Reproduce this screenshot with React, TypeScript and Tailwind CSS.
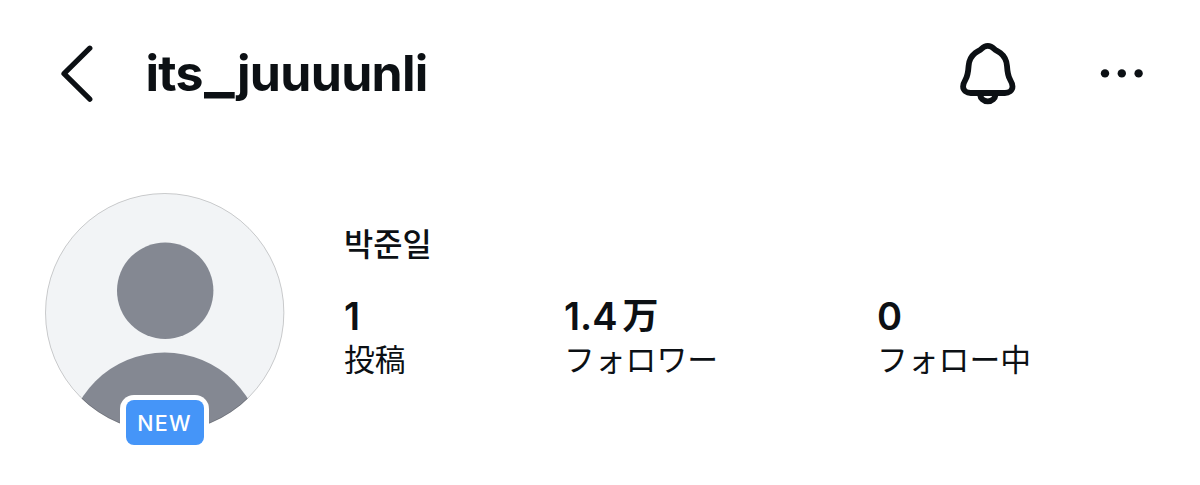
import React from "react";

interface StatProps {
  value: string;
  unit?: string;
  label: string;
  className?: string;
}

const Stat: React.FC<StatProps> = ({ value, unit, label, className }) => {
  return (
    <div className={`whitespace-nowrap ${className ?? ""}`}>
      <p className="flex h-[44px] items-center text-[38px] leading-[44px] font-semibold">
        {value}
        {unit && (
          <span className="ml-[5px] text-[36px] font-bold">{unit}</span>
        )}
      </p>
      <p className="h-[42px] text-[30.8px] leading-[44px]">{label}</p>
    </div>
  );
};

const BellIcon = () => (
  <svg
    className="ml-px"
    width="58"
    height="64"
    viewBox="0 0 58 64"
    fill="none"
    stroke="currentColor"
    strokeWidth="5.8"
    strokeLinejoin="round"
    strokeLinecap="round"
  >
    <path d="M28.8 4.8C25.8 4.8 24 6.3 22.3 8C20.8 9.5 18.5 10.2 16.2 12C12 15.3 9.9 19.5 9.6 25C9.2 31 8.9 34.4 6.6 38.4C5.2 40.8 4.1 43.2 4.1 45.6C4.1 49.5 7.7 52 11.7 52H45.9C49.9 52 53.5 49.5 53.5 45.6C53.5 43.2 52.4 40.8 51 38.4C48.7 34.4 48.4 31 48 25C47.7 19.5 45.6 15.3 41.4 12C39.1 10.2 36.8 9.5 35.3 8C33.6 6.3 31.8 4.8 28.8 4.8Z" />
    <path strokeLinecap="butt" d="M20.9 53C21.5 57.6 24.5 60.4 28.8 60.4C33.1 60.4 36.1 57.6 36.7 53" />
  </svg>
);

const Avatar = () => (
  <div className="relative h-[240px] w-[240px] shrink-0">
    <svg width="240" height="240" viewBox="0 0 240 240">
      <clipPath id="avatar">
        <circle cx="119.7" cy="119.7" r="119.5" />
      </clipPath>
      <circle cx="119.7" cy="119.7" r="119.5" fill="#f2f4f6" />
      <g clipPath="url(#avatar)" fill="#848892">
        <circle cx="120.2" cy="97.7" r="48.2" />
        <circle cx="119.7" cy="257.5" r="98" />
      </g>
      <circle cx="119.7" cy="119.7" r="119.2" fill="none" stroke="#000" strokeOpacity=".18" />
    </svg>
    <div className="absolute top-[201.5px] left-[75px] flex h-[56px] w-[89px] items-center justify-center rounded-[14px] bg-white">
      <span className="flex h-[45px] w-[78px] shrink-0 items-center justify-center rounded-[8px] bg-[#4595f8] pt-[2px] text-[21.5px] font-medium tracking-[1.2px] text-white">
        NEW
      </span>
    </div>
  </div>
);

const App = () => {
  return (
    <div className="h-[485px] w-full overflow-hidden bg-white font-['Inter','Noto_Sans_CJK_JP',sans-serif] text-[#0c1014]">
      <header className="flex h-[146px] items-center pr-[56px] pl-[60px]">
        <svg
          width="34"
          height="58"
          viewBox="0 0 34 58"
          fill="none"
          stroke="currentColor"
          strokeWidth="5.2"
          strokeLinecap="round"
          strokeLinejoin="round"
        >
          <path d="M29.8 4.2L4 29.7L29.8 55.2" />
        </svg>
        <h1 className="ml-[51.5px] flex-1 text-[50px] leading-[60px] font-bold tracking-[-0.7px]">
          its
          <span className="mr-[10px] ml-px inline-block origin-[0_49px] translate-y-[1px] scale-x-[1.29] scale-y-[1.15]">
            _
          </span>
          juuuunli
        </h1>
        <BellIcon />
        <svg className="ml-[83px]" width="44" height="10" viewBox="0 0 44 10" fill="currentColor">
          <circle cx="5" cy="5.4" r="4.2" />
          <circle cx="21.8" cy="5.4" r="4.2" />
          <circle cx="38.6" cy="5.4" r="4.2" />
        </svg>
      </header>
      <main className="flex pt-[47px] pl-[45px]">
        <Avatar />
        <section className="ml-[59px] pt-[27px]">
          <h2 className="h-[44px] font-['Noto_Sans_CJK_KR',sans-serif] text-[31.8px] leading-[44px] font-medium">
            박준일
          </h2>
          <div className="mt-[30px] flex">
            <Stat value="1" label="投稿" className="w-[220px]" />
            <Stat value="1.4" unit="万" label="フォロワー" className="w-[313px]" />
            <Stat value="0" label="フォロー中" />
          </div>
        </section>
      </main>
    </div>
  );
};

export default App;
